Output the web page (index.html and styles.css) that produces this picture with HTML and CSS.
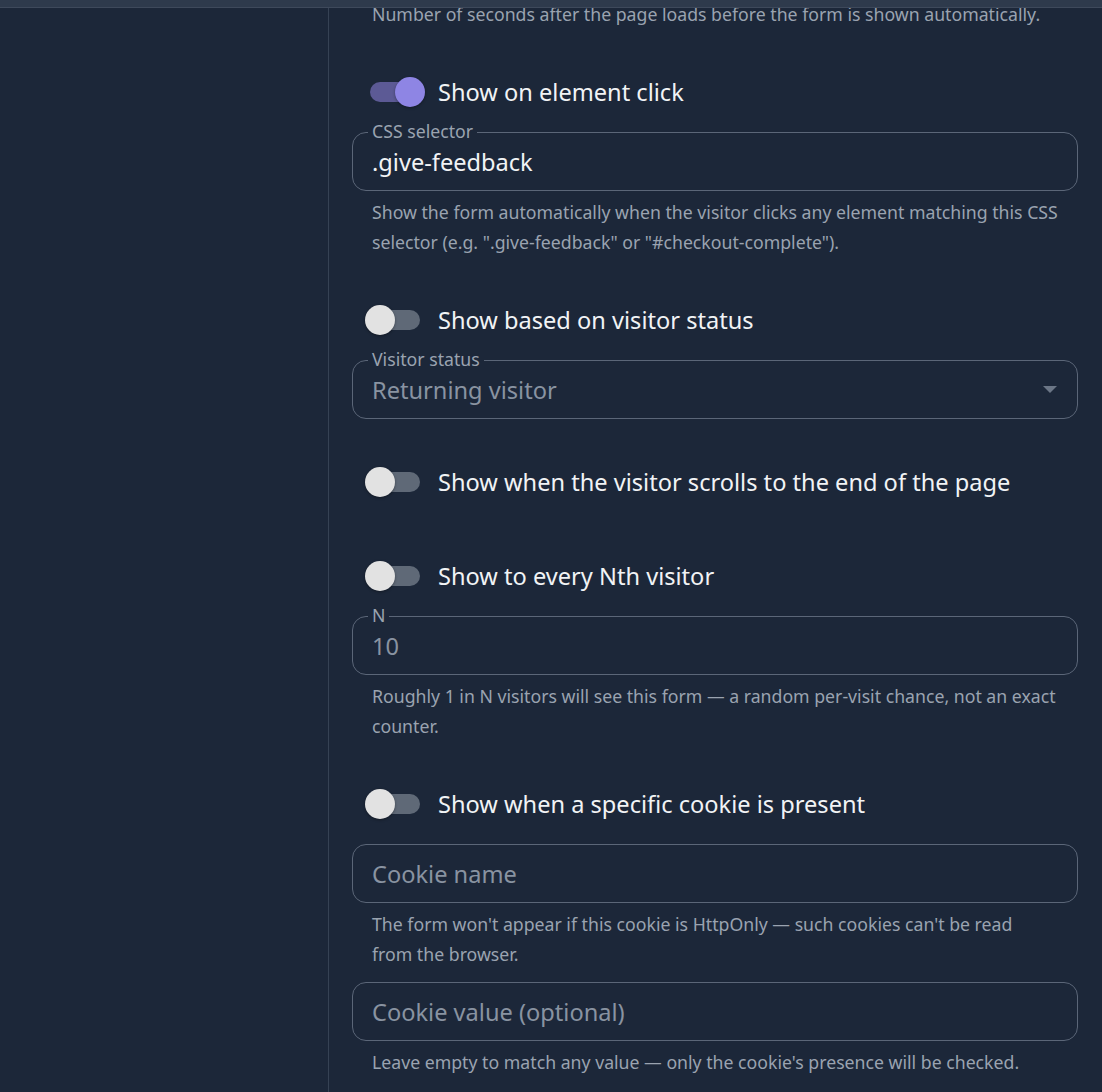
FILE: index.html
```html
<!DOCTYPE html>
<html lang="en">
<head>
<meta charset="utf-8">
<title>Form display rules</title>
<link rel="stylesheet" href="styles.css">
</head>
<body>
<header class="topbar"></header>
<div class="layout">
  <aside class="sidebar"></aside>
  <main class="main">
    <p class="helper helper-top">Number of seconds after the page loads before the form is shown automatically.</p>

    <section class="rule">
      <div class="toggle-row">
        <span class="switch switch-on"><span class="track"></span><span class="thumb"></span></span>
        <span class="toggle-label">Show on element click</span>
      </div>
      <div class="field">
        <span class="float-label">CSS selector</span>
        <span class="value">.give-feedback</span>
      </div>
      <p class="helper">Show the form automatically when the visitor clicks any element matching this CSS selector (e.g. ".give-feedback" or "#checkout-complete").</p>
    </section>

    <section class="rule">
      <div class="toggle-row">
        <span class="switch"><span class="track"></span><span class="thumb"></span></span>
        <span class="toggle-label">Show based on visitor status</span>
      </div>
      <div class="field field-select">
        <span class="float-label">Visitor status</span>
        <span class="value value-muted">Returning visitor</span>
        <svg class="caret" width="14" height="7" viewBox="0 0 14 7"><path d="M0 0h14L7 7z" fill="#6b7686"/></svg>
      </div>
    </section>

    <section class="rule rule-solo">
      <div class="toggle-row">
        <span class="switch"><span class="track"></span><span class="thumb"></span></span>
        <span class="toggle-label">Show when the visitor scrolls to the end of the page</span>
      </div>
    </section>

    <section class="rule">
      <div class="toggle-row">
        <span class="switch"><span class="track"></span><span class="thumb"></span></span>
        <span class="toggle-label">Show to every Nth visitor</span>
      </div>
      <div class="field">
        <span class="float-label">N</span>
        <span class="value value-muted">10</span>
      </div>
      <p class="helper">Roughly 1 in N visitors will see this form — a random per-visit chance, not an exact counter.</p>
    </section>

    <section class="rule">
      <div class="toggle-row">
        <span class="switch"><span class="track"></span><span class="thumb"></span></span>
        <span class="toggle-label">Show when a specific cookie is present</span>
      </div>
      <div class="field">
        <span class="value value-muted">Cookie name</span>
      </div>
      <p class="helper">The form won't appear if this cookie is HttpOnly — such cookies can't be read <span class="nowrap">from the browser.</span></p>
      <div class="field field-next">
        <span class="value value-muted">Cookie value (optional)</span>
      </div>
      <p class="helper">Leave empty to match any value — only the cookie's presence will be checked.</p>
    </section>
  </main>
</div>
</body>
</html>
```

FILE: styles.css
```css
* { box-sizing: border-box; }

html, body {
  margin: 0;
  padding: 0;
  background: #1c2739;
  height: 100%;
  overflow: hidden;
}

body {
  font-family: "Noto Sans", "Open Sans", sans-serif;
  color: #eef0f3;
}

.topbar {
  position: fixed;
  top: 0;
  left: 0;
  right: 0;
  height: 8px;
  background: #2e3a4c;
  border-bottom: 1px solid #3e495b;
  z-index: 5;
}

.layout {
  display: flex;
  min-height: 100%;
}

.sidebar {
  width: 329px;
  flex: none;
  border-right: 1px solid #364254;
}

.main {
  flex: 1;
  padding: 0 24px 0 23px;
}

.helper {
  margin: 6px 0 0;
  padding: 0 20px;
  font-size: 17.7px;
  line-height: 30px;
  color: #9aa3b0;
}

.nowrap {
  white-space: nowrap;
}

.helper-top {
  margin-top: -1px;
}

.rule {
  margin-top: 39px;
}

.rule-solo {
  padding-bottom: 7px;
}

.toggle-row {
  display: flex;
  align-items: center;
  height: 48px;
  gap: 13px;
  padding-left: 13px;
}

.switch {
  position: relative;
  width: 60px;
  height: 30px;
  flex: none;
}

.track {
  position: absolute;
  left: 5px;
  top: 5px;
  width: 50px;
  height: 20px;
  border-radius: 10px;
  background: #5f6977;
}

.thumb {
  position: absolute;
  left: 0;
  top: 0;
  width: 30px;
  height: 30px;
  border-radius: 50%;
  background: #e2e2e2;
  box-shadow: 0 1px 3px rgba(0, 0, 0, 0.35);
}

.switch-on .track {
  background: #5c5a95;
}

.switch-on .thumb {
  left: 30px;
  background: #8e85e4;
}

.toggle-label {
  font-size: 23.6px;
  line-height: 30px;
  color: #f1f3f5;
}

.field {
  position: relative;
  margin-top: 16px;
  height: 59px;
  border: 1px solid #5b6678;
  border-radius: 14px;
  display: flex;
  align-items: center;
  padding: 0 19px;
}

.field-next {
  margin-top: 13px;
}

.float-label {
  position: absolute;
  top: -12px;
  left: 15px;
  padding: 0 4px;
  background: #1c2739;
  font-size: 17.7px;
  line-height: 20px;
  color: #9aa3b0;
}

.value {
  font-size: 23.6px;
  line-height: 30px;
  color: #f1f3f5;
}

.value-muted {
  color: #8993a1;
}

.field-select {
  justify-content: space-between;
}

.caret {
  margin-right: 1px;
}
```
